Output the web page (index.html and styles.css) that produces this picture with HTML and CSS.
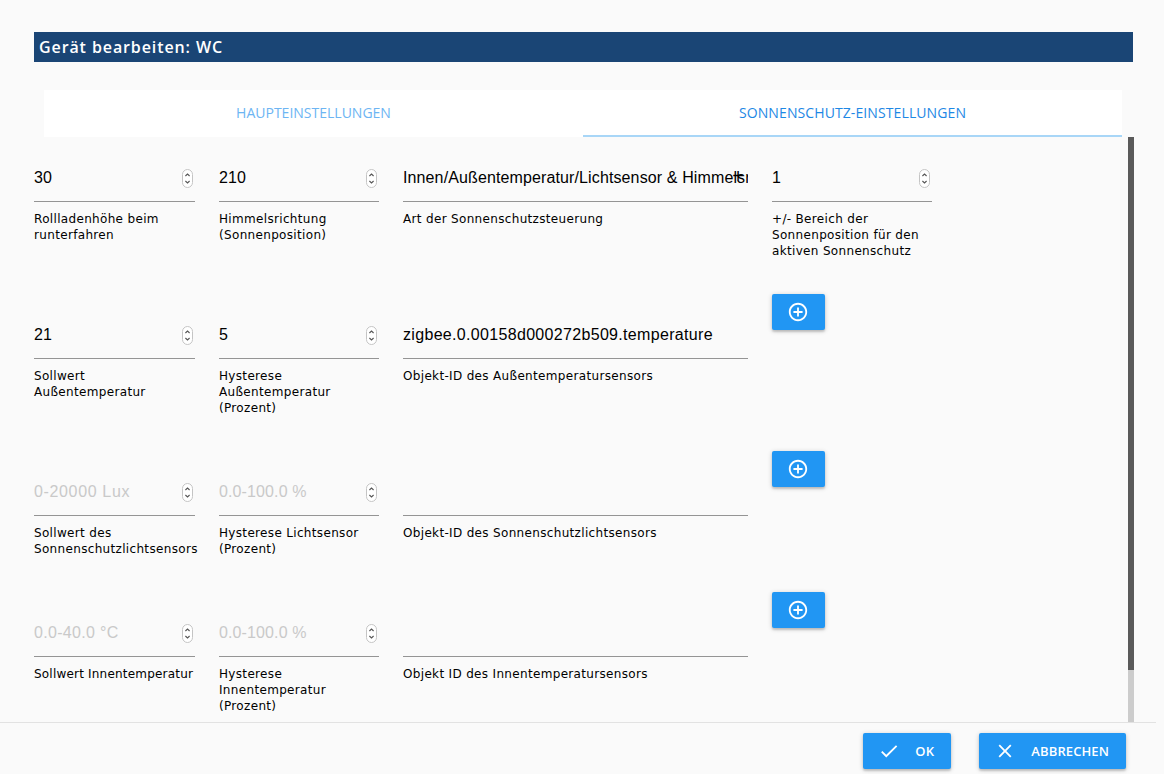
FILE: index.html
```html
<!DOCTYPE html>
<html lang="de">
<head>
<meta charset="utf-8">
<title>Gerät bearbeiten: WC</title>
<link rel="stylesheet" href="styles.css">
</head>
<body>
<svg class="defs" width="0" height="0" aria-hidden="true">
  <symbol id="spin" viewBox="0 0 11 19">
    <rect x="0.5" y="0.5" width="10" height="18" rx="5" fill="#fff" stroke="#c4c4c4"/>
    <path d="M3.4 7 5.5 5 7.6 7M3.4 12 5.5 14 7.6 12" fill="none" stroke="#555" stroke-width="1.1"/>
  </symbol>
  <symbol id="plus" viewBox="0 0 24 24">
    <path d="M13 7h-2v4H7v2h4v4h2v-4h4v-2h-4V7zm-1-5C6.48 2 2 6.48 2 12s4.48 10 10 10 10-4.48 10-10S17.52 2 12 2zm0 18c-4.41 0-8-3.59-8-8s3.59-8 8-8 8 3.59 8 8-3.59 8-8 8z" fill="#fff"/>
  </symbol>
</svg>
<div class="dialog">
  <h1 class="title">Gerät bearbeiten: WC</h1>
  <div class="tabs">
    <div class="tab">HAUPTEINSTELLUNGEN</div>
    <div class="tab active">SONNENSCHUTZ-EINSTELLUNGEN</div>
  </div>
  <div class="body">
    <div class="form">
      <div class="row">
        <div class="field"><div class="input"><span class="val">30</span><svg class="spin"><use href="#spin"/></svg></div><div class="label">Rollladenhöhe beim runterfahren</div></div>
        <div class="field"><div class="input"><span class="val">210</span><svg class="spin"><use href="#spin"/></svg></div><div class="label">Himmelsrichtung (Sonnenposition)</div></div>
        <div class="field"><div class="input"><span class="val">Innen/Außentemperatur/Lichtsensor &amp; Himmelsrichtung</span><span class="caret">+</span></div><div class="label">Art der Sonnenschutzsteuerung</div></div>
        <div class="field"><div class="input"><span class="val">1</span><svg class="spin"><use href="#spin"/></svg></div><div class="label">+/- Bereich der Sonnenposition für den aktiven Sonnenschutz</div></div>
      </div>
      <div class="row">
        <div class="field"><div class="input"><span class="val">21</span><svg class="spin"><use href="#spin"/></svg></div><div class="label">Sollwert Außentemperatur</div></div>
        <div class="field"><div class="input"><span class="val">5</span><svg class="spin"><use href="#spin"/></svg></div><div class="label">Hysterese Außentemperatur (Prozent)</div></div>
        <div class="field"><div class="input"><span class="val wide">zigbee.0.00158d000272b509.temperature</span></div><div class="label">Objekt-ID des Außentemperatursensors</div></div>
        <button class="add"><svg class="add-icon"><use href="#plus"/></svg></button>
      </div>
      <div class="row">
        <div class="field"><div class="input"><span class="val ph wider">0-20000 Lux</span><svg class="spin"><use href="#spin"/></svg></div><div class="label">Sollwert des Sonnenschutzlichtsensors</div></div>
        <div class="field"><div class="input"><span class="val ph">0.0-100.0 %</span><svg class="spin"><use href="#spin"/></svg></div><div class="label">Hysterese Lichtsensor (Prozent)</div></div>
        <div class="field"><div class="input"></div><div class="label">Objekt-ID des Sonnenschutzlichtsensors</div></div>
        <button class="add"><svg class="add-icon"><use href="#plus"/></svg></button>
      </div>
      <div class="row">
        <div class="field"><div class="input"><span class="val ph wide">0.0-40.0 °C</span><svg class="spin"><use href="#spin"/></svg></div><div class="label single">Sollwert Innentemperatur</div></div>
        <div class="field"><div class="input"><span class="val ph">0.0-100.0 %</span><svg class="spin"><use href="#spin"/></svg></div><div class="label">Hysterese Innentemperatur (Prozent)</div></div>
        <div class="field"><div class="input"></div><div class="label">Objekt ID des Innentemperatursensors</div></div>
        <button class="add"><svg class="add-icon"><use href="#plus"/></svg></button>
      </div>
    </div>
    <div class="scrollbar"><div class="thumb"></div></div>
  </div>
  <div class="footer">
    <button class="btn btn-ok"><svg class="btn-icon" viewBox="0 0 24 24"><path d="M9 16.2 4.8 12l-1.400 1.400L9 19 21 7l-1.400-1.400z" fill="#fff"/></svg><span>OK</span></button>
    <button class="btn"><svg class="btn-icon" viewBox="0 0 24 24"><path d="M19 6.400 17.600 5 12 10.600 6.400 5 5 6.400 10.600 12 5 17.600 6.400 19 12 13.400 17.600 19 19 17.600 13.400 12z" fill="#fff"/></svg><span>ABBRECHEN</span></button>
  </div>
</div>
</body>
</html>
```
FILE: styles.css
```css
* { box-sizing: border-box; }
html, body { margin: 0; height: 100%; overflow: hidden; }
body { background: #fafafa; color: #000; font-family: "Liberation Sans", Arial, sans-serif; }
.defs { position: absolute; }
.dialog { height: 774px; display: flex; flex-direction: column; }
.title {
  margin: 32px 31px 0 34px; height: 30px; padding-left: 5px;
  background: #1a4575; color: #fff;
  font: 600 16px/30px "Open Sans", sans-serif;
  letter-spacing: 0.9px;
}
.tabs {
  margin: 28px 42px 0 44px; height: 47px; display: flex; background: #fff;
  font: 14px/46px "Open Sans", sans-serif;
}
.tab { flex: 1; text-align: center; color: #6db5f3; }
.tab.active { color: #1e88e5; border-bottom: 2px solid #a8d6f7; letter-spacing: 0.1px; }
.body { flex: 1; min-height: 0; display: flex; padding-left: 34px; }
.form { width: 1094px; }
.row { display: grid; grid-template-columns: 161px 160px 345px 160px; column-gap: 24px; padding-bottom: 35px; }
.field { padding-top: 25px; min-width: 0; }
.input {
  height: 40px; border-bottom: 1px solid #949494; display: flex; align-items: center;
  padding-bottom: 7px; position: relative; overflow: hidden;
  font-size: 16px; line-height: 18px;
}
.val { flex: 1; white-space: nowrap; overflow: hidden; letter-spacing: 0.12px; }
.wide { letter-spacing: 0.32px; }
.wider { letter-spacing: 0.65px; }
.ph { color: #c9c9c9; }
.spin { width: 11px; height: 19px; margin-right: 2px; flex: none; }
.caret { position: absolute; right: 4px; top: 5px; font-size: 20px; }
.label { margin-top: 9px; font: 12px/16px "DejaVu Sans", sans-serif; letter-spacing: 0.33px; }
.single { white-space: nowrap; letter-spacing: 0.2px; }
.add {
  width: 53px; height: 36px; padding: 0 1px 0 0; border: 0; border-radius: 2px; background: #2196f3;
  display: flex; align-items: center; justify-content: center;
  box-shadow: 0 1px 5px rgba(0,0,0,.2), 0 2px 2px rgba(0,0,0,.14);
}
.add-icon { width: 22px; height: 22px; }
.scrollbar { width: 6px; background: #ccc; }
.thumb { height: 533px; background: #5a5a5a; }
.footer {
  height: 52px; margin-right: 8px; border-top: 1px solid #e2e2e2;
  display: flex; justify-content: flex-end; gap: 28px; padding: 10px 30px 0 0;
}
.btn {
  height: 36px; padding: 0 17px 0 15px; border: 0; border-radius: 2px; background: #2196f3; color: #fff;
  display: flex; align-items: center; gap: 15px;
  font: 600 13px/36px "Open Sans", sans-serif; letter-spacing: 0.1px;
  box-shadow: 0 1px 5px rgba(0,0,0,.2), 0 2px 2px rgba(0,0,0,.14);
}
.btn-ok { min-width: 88px; }
.btn-icon { width: 22px; height: 22px; }
```
